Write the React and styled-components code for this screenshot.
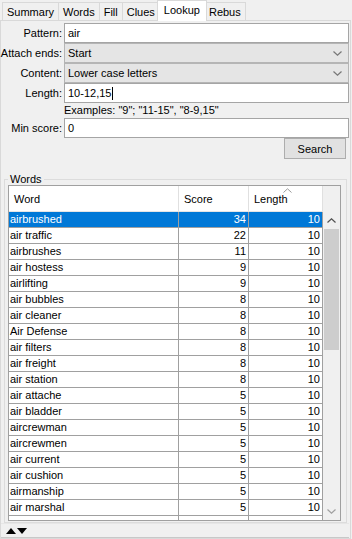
import styled, { createGlobalStyle } from "styled-components";

const GlobalStyle = createGlobalStyle`
  html, body {
    margin: 0;
    padding: 0;
    background: #f0f0f0;
  }
  body {
    font-family: "Liberation Sans", Arial, sans-serif;
    font-size: 11px;
    color: #000;
  }
`;

const Window = styled.div`
  width: 352px;
  height: 539px;
  display: flex;
  flex-direction: column;
  overflow: hidden;
  background: #f0f0f0;
`;

const TabBar = styled.div`
  display: flex;
  align-items: flex-end;
  height: 20px;
  padding-left: 2px;
  position: relative;
  z-index: 1;
`;

const Tab = styled.div`
  position: relative;
  box-sizing: border-box;
  height: ${(p) => (p.$active ? 21 : 18)}px;
  margin: 0 ${(p) => (p.$active ? -2 : 0)}px ${(p) => (p.$active ? -1 : 0)}px
    ${(p) => (p.$active ? -3 : -1)}px;
  padding: 0 ${(p) => (p.$active ? 6 : 4)}px ${(p) => (p.$active ? 2 : 0)}px;
  display: flex;
  align-items: center;
  border: 1px solid #d9d9d9;
  border-bottom: none;
  background: ${(p) => (p.$active ? "#fff" : "#f0f0f0")};
  z-index: ${(p) => (p.$active ? 2 : 1)};
  white-space: nowrap;
  &:first-child {
    margin-left: 0;
  }
`;

const Panel = styled.div`
  flex: 1;
  min-height: 0;
  margin-right: 1px;
  border: 1px solid #d9d9d9;
  padding: 2px 1px 0 0;
  display: flex;
  flex-direction: column;
`;

const Form = styled.div`
  display: grid;
  grid-template-columns: 61px 1fr;
  column-gap: 2px;
`;

const Label = styled.div`
  height: 20px;
  display: flex;
  align-items: center;
  justify-content: flex-end;
  white-space: nowrap;
`;

const TextBox = styled.div`
  height: 20px;
  box-sizing: border-box;
  border: 1px solid #a5a5a5;
  background: #fff;
  padding: 0 3px;
  display: flex;
  align-items: center;
  white-space: nowrap;
`;

const Caret = styled.span`
  width: 1px;
  height: 13px;
  background: #000;
  margin-left: 1px;
`;

const Select = styled.div`
  height: 20px;
  box-sizing: border-box;
  border: 1px solid #b5b5b5;
  background: #e5e5e5;
  padding: 0 6px 0 3px;
  display: flex;
  align-items: center;
  justify-content: space-between;
`;

const Hint = styled.div`
  grid-column: 2;
  height: 15px;
  line-height: 15px;
  white-space: nowrap;
`;

const ButtonRow = styled.div`
  display: flex;
  justify-content: flex-end;
  padding-right: 3px;
`;

const Button = styled.div`
  width: 62px;
  height: 21px;
  box-sizing: border-box;
  border: 1px solid #adadad;
  background: #e1e1e1;
  display: flex;
  align-items: center;
  justify-content: center;
`;

const Group = styled.fieldset`
  flex: 1;
  min-height: 0;
  margin: 14px 2px 0 3px;
  padding: 0 5px 1px 3px;
  border: 1px solid #dcdcdc;
  display: flex;
  flex-direction: column;
  min-width: 0;
`;

const Legend = styled.legend`
  padding: 0 2px;
  line-height: 13px;
`;

const Table = styled.div`
  flex: 1;
  min-height: 0;
  margin-top: -1px;
  border: 1px solid #a0a0a0;
  display: flex;
  background: #fff;
`;

const TableMain = styled.div`
  width: 314px;
  display: flex;
  flex-direction: column;
  overflow: hidden;
`;

const HeaderRow = styled.div`
  display: grid;
  grid-template-columns: 170px 70px 74px;
  height: 26px;
  flex-shrink: 0;
  box-sizing: border-box;
  border-bottom: 1px solid #e5e5e5;
`;

const HeaderCell = styled.div`
  position: relative;
  display: flex;
  align-items: center;
  padding: 1px 0 0 5px;
  border-right: 1px solid #e0e0e0;
`;

const SortMark = styled.svg`
  position: absolute;
  top: 2px;
  left: 34px;
`;

const Row = styled.div`
  display: grid;
  grid-template-columns: 170px 70px 74px;
  height: 16px;
  flex-shrink: 0;
  box-sizing: border-box;
  border-bottom: 1px solid #a0a0a0;
  background: ${(p) => (p.$selected ? "#0078d7" : "#fff")};
  color: ${(p) => (p.$selected ? "#fff" : "#000")};
`;

const Cell = styled.div`
  line-height: 15px;
  padding: 0 ${(p) => (p.$num ? 2 : 0)}px 0 ${(p) => (p.$num ? 0 : 1)}px;
  text-align: ${(p) => (p.$num ? "right" : "left")};
  border-right: 1px solid #a0a0a0;
  white-space: nowrap;
  overflow: hidden;
`;

const ScrollColumn = styled.div`
  width: 17px;
  display: flex;
  flex-direction: column;
  background: #f0f0f0;
`;

const Corner = styled.div`
  height: 26px;
  flex-shrink: 0;
`;

const ArrowButton = styled.div`
  height: 17px;
  flex-shrink: 0;
  display: flex;
  align-items: center;
  justify-content: center;
`;

const Thumb = styled.div`
  height: ${(p) => p.$size}px;
  margin: 0 1px;
  background: #cdcdcd;
  flex-shrink: 0;
`;

const Track = styled.div`
  flex: 1;
`;

const Divider = styled.div`
  height: 15px;
  box-sizing: border-box;
  flex-shrink: 0;
  display: flex;
  align-items: center;
  padding: 1px 0 0 5px;
  border-top: 1px solid #e6e6e6;
  border-bottom: 1px solid #c8c8c8;
`;

const Chevron = ({ up, color = "#606060", width = 9 }) => (
  <svg width={width} height="5" viewBox="0 0 9 5">
    <polyline
      points={up ? "0.5,4.5 4.5,0.8 8.5,4.5" : "0.5,0.5 4.5,4.2 8.5,0.5"}
      fill="none"
      stroke={color}
      strokeWidth="1.2"
    />
  </svg>
);

const words = [
  ["airbrushed", 34, 10],
  ["air traffic", 22, 10],
  ["airbrushes", 11, 10],
  ["air hostess", 9, 10],
  ["airlifting", 9, 10],
  ["air bubbles", 8, 10],
  ["air cleaner", 8, 10],
  ["Air Defense", 8, 10],
  ["air filters", 8, 10],
  ["air freight", 8, 10],
  ["air station", 8, 10],
  ["air attache", 5, 10],
  ["air bladder", 5, 10],
  ["aircrewman", 5, 10],
  ["aircrewmen", 5, 10],
  ["air current", 5, 10],
  ["air cushion", 5, 10],
  ["airmanship", 5, 10],
  ["air marshal", 5, 10],
  ["", "", ""],
];

const tabs = ["Summary", "Words", "Fill", "Clues", "Lookup", "Rebus"];

export default function App() {
  return (
    <Window>
      <GlobalStyle />
      <TabBar>
        {tabs.map((t) => (
          <Tab key={t} $active={t === "Lookup"}>
            {t}
          </Tab>
        ))}
      </TabBar>
      <Panel>
        <Form>
          <Label>Pattern:</Label>
          <TextBox>air</TextBox>
          <Label>Attach ends:</Label>
          <Select>
            Start
            <Chevron color="#777" />
          </Select>
          <Label>Content:</Label>
          <Select>
            Lower case letters
            <Chevron color="#777" />
          </Select>
          <Label>Length:</Label>
          <TextBox>
            10-12,15
            <Caret />
          </TextBox>
          <Hint>Examples: "9"; "11-15", "8-9,15"</Hint>
          <Label>Min score:</Label>
          <TextBox>0</TextBox>
        </Form>
        <ButtonRow>
          <Button>Search</Button>
        </ButtonRow>
        <Group>
          <Legend>Words</Legend>
          <Table>
            <TableMain>
              <HeaderRow>
                <HeaderCell>Word</HeaderCell>
                <HeaderCell>Score</HeaderCell>
                <HeaderCell>
                  <SortMark width="9" height="5" viewBox="0 0 9 5">
                    <polyline points="0.5,4.5 4.5,0.8 8.5,4.5" fill="none" stroke="#9a9a9a" strokeWidth="1" />
                  </SortMark>
                  Length
                </HeaderCell>
              </HeaderRow>
              {words.map(([w, s, l], i) => (
                <Row key={i} $selected={i === 0}>
                  <Cell>{w}</Cell>
                  <Cell $num>{s}</Cell>
                  <Cell $num>{l}</Cell>
                </Row>
              ))}
            </TableMain>
            <ScrollColumn>
              <Corner />
              <ArrowButton>
                <Chevron up color="#505050" />
              </ArrowButton>
              <Thumb $size={121} />
              <Track />
              <ArrowButton>
                <Chevron color="#a0a0a0" />
              </ArrowButton>
            </ScrollColumn>
          </Table>
        </Group>
        <Divider>
          <svg width="22" height="6" viewBox="0 0 22 6">
            <polygon points="0,6 5,0 10,6" fill="#000" />
            <polygon points="11,0 21,0 16,6" fill="#000" />
          </svg>
        </Divider>
      </Panel>
    </Window>
  );
}
